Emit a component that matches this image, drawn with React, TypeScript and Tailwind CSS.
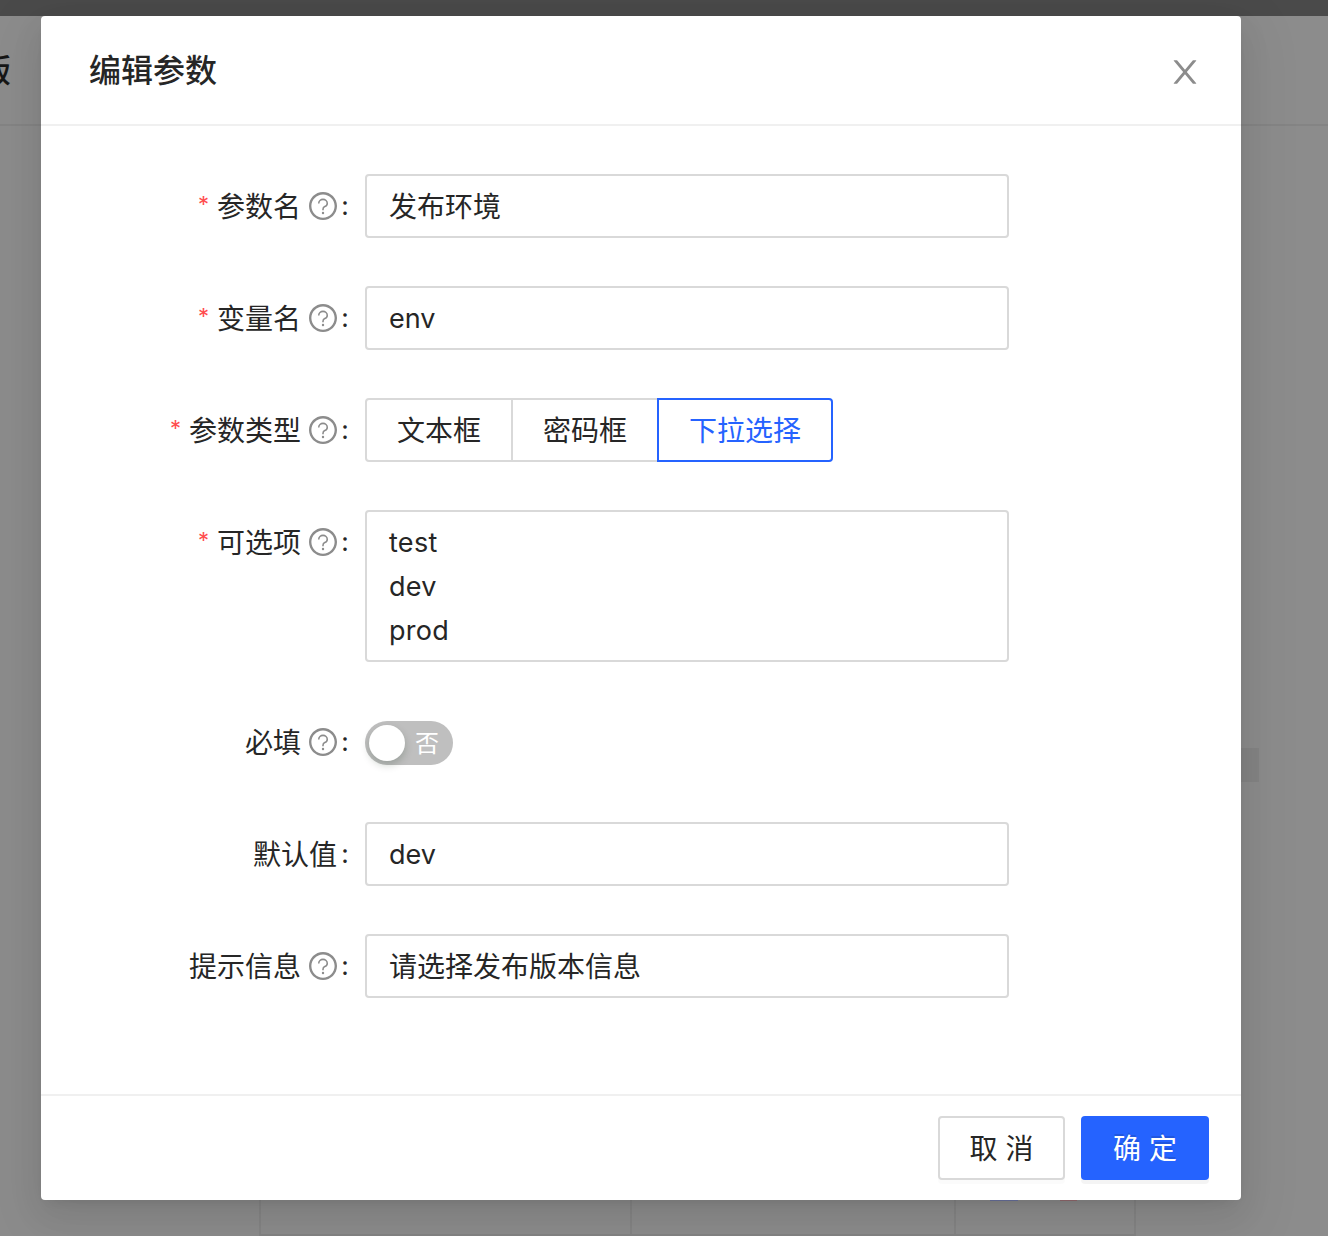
import React from "react";

const FONT = "font-['Inter','Noto_Sans_CJK_SC',sans-serif]";

function QuestionIcon() {
  return (
    <svg viewBox="64 64 896 896" className="size-7 shrink-0 fill-[#8c8c8c]" aria-hidden="true">
      <path d="M512 64C264.6 64 64 264.6 64 512s200.6 448 448 448 448-200.6 448-448S759.4 64 512 64zm0 820c-205.4 0-372-166.6-372-372s166.6-372 372-372 372 166.6 372 372-166.6 372-372 372z" />
      <path
        d="M376 428v-8c0-66 61-120 136-120s136 54 136 120c0 49-30 91-78 110-36 14-58 47-58 86v34"
        fill="none"
        stroke="#8c8c8c"
        strokeWidth="50"
      />
      <circle cx="512" cy="736" r="38" />
    </svg>
  );
}

function CloseIcon() {
  return (
    <svg viewBox="64 64 896 896" className="size-8 fill-[#8c8c8c]" aria-hidden="true">
      <path d="M563.8 512l262.5-312.9c4.4-5.2.7-13.1-6.1-13.1h-79.8c-4.7 0-9.2 2.1-12.3 5.7L511.6 449.8 295.1 191.7c-3-3.6-7.5-5.7-12.3-5.7H203c-6.8 0-10.5 7.9-6.1 13.1L459.4 512 196.9 824.9A7.95 7.95 0 0 0 203 838h79.8c4.7 0 9.2-2.1 12.3-5.7l216.5-258.1 216.5 258.1c3 3.6 7.5 5.7 12.3 5.7h79.8c6.8 0 10.5-7.9 6.1-13.1L563.8 512z" />
    </svg>
  );
}

type FieldProps = {
  label: string;
  required?: boolean;
  help?: boolean;
  children: React.ReactNode;
};

function Field({ label, required = false, help = true, children }: FieldProps) {
  return (
    <div className="flex items-start">
      <div className="flex h-16 w-[324px] shrink-0 items-center justify-end">
        {required && (
          <span className="mr-2 w-[11px] pb-1 text-center font-['Inter',sans-serif] text-[22px] leading-none text-[#ff4d4f]">*</span>
        )}
        <span className="pt-[2px] whitespace-nowrap">{label}</span>
        {help && (
          <span className="ml-2">
            <QuestionIcon />
          </span>
        )}
        <span className="mr-4 ml-1 w-2 text-center text-[26px]">:</span>
      </div>
      {children}
    </div>
  );
}

function TextInput({ value, latin = false }: { value: string; latin?: boolean }) {
  return (
    <input
      readOnly
      value={value}
      className={`h-16 w-[644px] rounded-[4px] border-2 border-[#d9d9d9] bg-white px-[22px] outline-none ${
        latin ? "text-[27px]" : "pb-[2px]"
      }`}
    />
  );
}

function Backdrop() {
  return (
    <div className="col-start-1 row-start-1 flex h-[1236px] w-[1328px] flex-col overflow-hidden bg-[#8c8c8c]">
      <div className="h-4 shrink-0 bg-[#4a4a4a]" />
      <div className="flex h-[110px] shrink-0 items-center border-b-2 border-[#848484]">
        <span className="-ml-[21px] pt-[2px] text-[32px] font-medium text-[#161616]">版</span>
      </div>
      <div className="mt-[622px] flex h-[34px] shrink-0 justify-end pr-[69px]">
        <div className="w-[60px] bg-[#848484]" />
      </div>
      <div className="mt-[398px] ml-[259px] flex h-[56px] w-[877px] shrink-0 border-b-2 border-l-2 border-[#848484]">
        <div className="w-[371px] border-r-2 border-[#848484]" />
        <div className="w-[324px] border-r-2 border-[#848484]" />
        <div className="flex w-[180px] gap-[42px] border-r-2 border-[#848484] pt-[19px] pl-[34px]">
          <div className="h-[2px] w-7 bg-[#6b74a0]" />
          <div className="h-[2px] w-[17px] bg-[#966c70]" />
        </div>
      </div>
    </div>
  );
}

export default function App() {
  return (
    <div className={`grid h-[1236px] w-[1328px] overflow-hidden text-[28px] leading-[44px] text-[#262626] ${FONT}`}>
      <Backdrop />
      <div
        role="dialog"
        className="z-10 col-start-1 row-start-1 mt-4 ml-[41px] flex h-[1184px] w-[1200px] flex-col rounded-[4px] bg-white shadow-[0_6px_12px_-8px_rgba(0,0,0,0.12),0_12px_32px_0_rgba(0,0,0,0.08),0_18px_56px_16px_rgba(0,0,0,0.05)]"
      >
        <header className="flex h-[110px] items-center justify-between border-b-2 border-[#f0f0f0] pr-10 pl-12">
          <h1 className="pt-[2px] text-[32px] font-medium">编辑参数</h1>
          <button className="mt-1">
            <CloseIcon />
          </button>
        </header>

        <main className="flex flex-1 flex-col gap-12 pt-12">
          <Field label="参数名" required>
            <TextInput value="发布环境" />
          </Field>
          <Field label="变量名" required>
            <TextInput value="env" latin />
          </Field>
          <Field label="参数类型" required>
            <div className="flex h-16">
              <button className="w-[148px] rounded-l-[4px] border-2 border-[#d9d9d9] pt-[2px]">文本框</button>
              <button className="w-[144px] border-y-2 border-[#d9d9d9] pt-[2px]">密码框</button>
              <button className="w-44 rounded-r-[4px] border-2 border-[#2563ff] pt-[2px] text-[#2563ff]">下拉选择</button>
            </div>
          </Field>
          <Field label="可选项" required>
            <textarea
              readOnly
              value={"test\ndev\nprod"}
              className="block h-[152px] w-[644px] resize-none overflow-hidden rounded-[4px] border-2 border-[#d9d9d9] px-[22px] pt-[9px] text-[27px] leading-[44px] tracking-[0.3px] outline-none"
            />
          </Field>
          <Field label="必填">
            <button
              role="switch"
              aria-checked="false"
              className="mt-[11px] flex h-11 w-[88px] items-center rounded-full bg-[#bfbfbf] pl-1 text-white"
            >
              <span className="size-9 rounded-full bg-white shadow-[0_4px_8px_0_rgba(0,35,11,0.2)]" />
              <span className="ml-[10px] pt-[2px] text-[24px]">否</span>
            </button>
          </Field>
          <Field label="默认值" help={false}>
            <TextInput value="dev" latin />
          </Field>
          <Field label="提示信息">
            <TextInput value="请选择发布版本信息" />
          </Field>
        </main>

        <footer className="flex h-[106px] items-center justify-end gap-4 border-t-2 border-[#f0f0f0] pr-8">
          <button className="h-16 w-[127px] rounded-[4px] border-2 border-[#d9d9d9] pt-[2px] shadow-[0_4px_0_rgba(0,0,0,0.016)]">
            取 消
          </button>
          <button className="h-16 w-32 rounded-[4px] bg-[#2563ff] pt-[2px] text-white shadow-[0_4px_0_rgba(0,0,0,0.045)] [text-shadow:0_-2px_0_rgba(0,0,0,0.12)]">
            确 定
          </button>
        </footer>
      </div>
    </div>
  );
}
